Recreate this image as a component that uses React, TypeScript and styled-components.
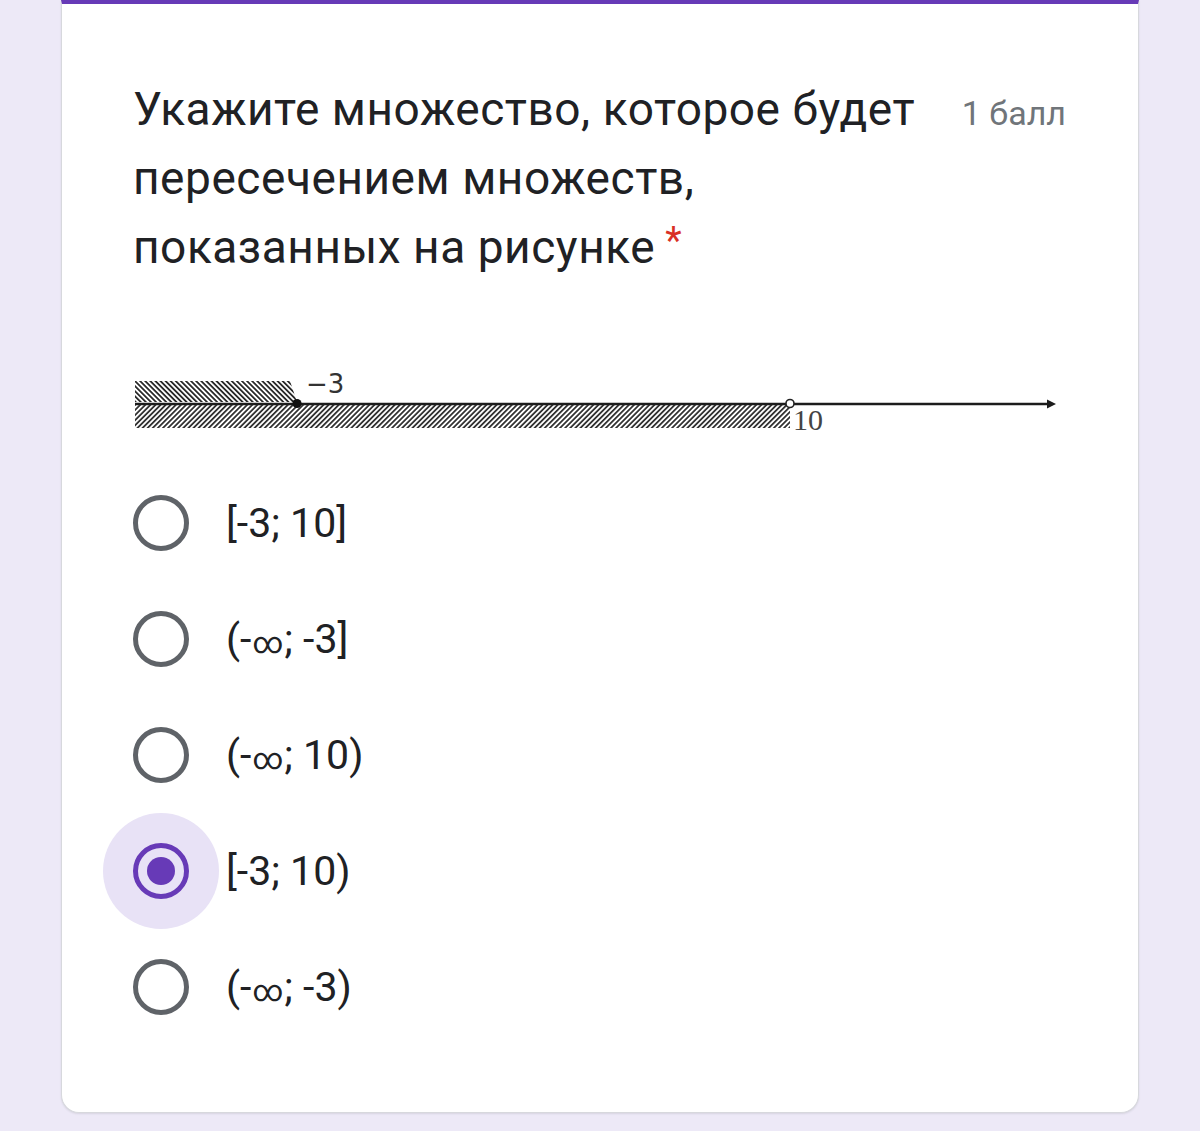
import React from "react";
import styled, { createGlobalStyle } from "styled-components";

const GlobalStyle = createGlobalStyle`
  html, body {
    margin: 0;
    padding: 0;
    background: #ede9f7;
  }
  body {
    font-family: Roboto, "Noto Sans", Arial, sans-serif;
  }
`;

const Page = styled.div`
  padding: 0 61px 18px 61px;
  min-height: 1131px;
  box-sizing: border-box;
`;

const Card = styled.section`
  background: #ffffff;
  border: 1px solid #d7d8dd;
  border-top: 4px solid #673ab7;
  border-radius: 0 0 18px 18px;
  box-shadow: 0 1px 2px rgba(60, 64, 67, 0.12);
  padding: 71px 72px 67px 71px;
`;

const Header = styled.div`
  display: flex;
  align-items: baseline;
  justify-content: space-between;
  gap: 24px;
`;

const Title = styled.h2`
  margin: 0;
  font-family: Roboto, "Noto Sans", Arial, sans-serif;
  font-weight: 400;
  font-size: 46px;
  line-height: 69px;
  color: #202124;
  letter-spacing: 0.55px;
`;

const Required = styled.span`
  color: #d93025;
  font-size: 38px;
  margin-left: 10px;
  vertical-align: top;
  line-height: 56px;
`;

const Points = styled.span`
  font-family: Roboto, "Noto Sans", Arial, sans-serif;
  font-size: 34px;
  color: #70757a;
  white-space: nowrap;
`;

const Figure = styled.div`
  margin-top: 83px;
  height: 75px;
`;

const Options = styled.div`
  margin-top: 25px;
  display: flex;
  flex-direction: column;
`;

const Option = styled.label`
  display: flex;
  align-items: center;
  height: 116px;
  gap: 37px;
  cursor: pointer;
`;

const Radio = styled.span<{ $checked?: boolean }>`
  position: relative;
  flex: none;
  width: 56px;
  height: 56px;
  box-sizing: border-box;
  border-radius: 50%;
  border: 5px solid ${(p) => (p.$checked ? "#673ab7" : "#5f6368")};
  display: flex;
  align-items: center;
  justify-content: center;

  &::before {
    content: "";
    position: absolute;
    left: 50%;
    top: 50%;
    width: 116px;
    height: 116px;
    margin: -58px 0 0 -58px;
    border-radius: 50%;
    background: #e8e2f6;
    z-index: -1;
    display: ${(p) => (p.$checked ? "block" : "none")};
  }

  &::after {
    content: "";
    width: 28px;
    height: 28px;
    border-radius: 50%;
    background: #673ab7;
    display: ${(p) => (p.$checked ? "block" : "none")};
  }
`;

const RadioHolder = styled.span`
  position: relative;
  z-index: 0;
  display: flex;
`;

const OptionText = styled.span`
  font-family: Roboto, "Noto Sans", Arial, sans-serif;
  font-size: 41px;
  color: #202124;
`;

const Infinity = styled.span`
  font-size: 30px;
  margin: 0 1px;
`;

const NumberLine: React.FC = () => (
  <svg width="930" height="75" viewBox="0 0 930 75">
    <defs>
      <pattern
        id="hatchBack"
        width="3.6"
        height="3.6"
        patternUnits="userSpaceOnUse"
        patternTransform="rotate(-45)"
      >
        <rect x="0" y="0" width="1.8" height="3.6" fill="#2a2a2a" />
      </pattern>
      <pattern
        id="hatchFwd"
        width="3.6"
        height="3.6"
        patternUnits="userSpaceOnUse"
        patternTransform="rotate(45)"
      >
        <rect x="0" y="0" width="1.8" height="3.6" fill="#333" />
      </pattern>
    </defs>
    <polygon points="2,16 157,16 164,37 2,37" fill="url(#hatchBack)" />
    <rect x="2" y="40" width="655" height="23" fill="url(#hatchFwd)" />
    <line x1="2" y1="39" x2="916" y2="39" stroke="#1c1c1c" strokeWidth="2.4" />
    <polygon points="914,34.5 923,39 914,43.5" fill="#1c1c1c" />
    <circle cx="164" cy="38.5" r="4.6" fill="#111" />
    <circle cx="657" cy="38.5" r="4" fill="#fff" stroke="#222" strokeWidth="1.6" />
    <text
      x="173"
      y="28"
      fontFamily="DejaVu Sans, sans-serif"
      fontSize="26"
      fill="#333"
    >
      −3
    </text>
    <text
      x="660"
      y="65"
      fontFamily="Liberation Serif, serif"
      fontSize="30"
      fill="#444"
    >
      10
    </text>
  </svg>
);

const options = [
  { pre: "[-3; 10]", inf: false, post: "", checked: false },
  { pre: "(-", inf: true, post: "; -3]", checked: false },
  { pre: "(-", inf: true, post: "; 10)", checked: false },
  { pre: "[-3; 10)", inf: false, post: "", checked: true },
  { pre: "(-", inf: true, post: "; -3)", checked: false },
];

export default function App() {
  return (
    <>
      <GlobalStyle />
      <Page>
        <Card>
          <Header>
            <Title>
              Укажите множество, которое будет
              <br />
              пересечением множеств,
              <br />
              показанных на рисунке
              <Required>*</Required>
            </Title>
            <Points>1 балл</Points>
          </Header>
          <Figure>
            <NumberLine />
          </Figure>
          <Options>
            {options.map((o, i) => (
              <Option key={i}>
                <RadioHolder>
                  <Radio $checked={o.checked} />
                </RadioHolder>
                <OptionText>
                  {o.pre}
                  {o.inf && <Infinity>∞</Infinity>}
                  {o.post}
                </OptionText>
              </Option>
            ))}
          </Options>
        </Card>
      </Page>
    </>
  );
}
